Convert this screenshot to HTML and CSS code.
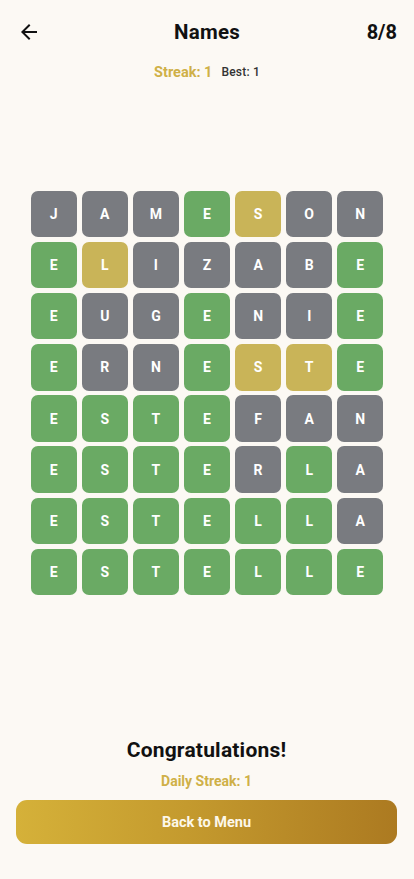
FILE: index.html
```html
<!DOCTYPE html>
<html lang="en">
<head>
<meta charset="utf-8">
<meta name="viewport" content="width=device-width, initial-scale=1">
<title>Names</title>
<link rel="stylesheet" href="styles.css">
</head>
<body>
<div class="app">
  <header class="header">
    <button class="back" aria-label="Back">
      <svg viewBox="0 0 24 24" width="24" height="24"><path d="M20 11H7.83l5.59-5.59L12 4l-8 8 8 8 1.41-1.41L7.83 13H20v-2z" fill="#111"/></svg>
    </button>
    <h1 class="title">Names</h1>
    <div class="count">8/8</div>
  </header>
  <div class="streak-row">
    <span class="streak">Streak: 1</span>
    <span class="best">Best: 1</span>
  </div>
  <main class="board-area">
    <div class="board">
      <div class="tile x">J</div><div class="tile x">A</div><div class="tile x">M</div><div class="tile g">E</div><div class="tile y">S</div><div class="tile x">O</div><div class="tile x">N</div>
      <div class="tile g">E</div><div class="tile y">L</div><div class="tile x">I</div><div class="tile x">Z</div><div class="tile x">A</div><div class="tile x">B</div><div class="tile g">E</div>
      <div class="tile g">E</div><div class="tile x">U</div><div class="tile x">G</div><div class="tile g">E</div><div class="tile x">N</div><div class="tile x">I</div><div class="tile g">E</div>
      <div class="tile g">E</div><div class="tile x">R</div><div class="tile x">N</div><div class="tile g">E</div><div class="tile y">S</div><div class="tile y">T</div><div class="tile g">E</div>
      <div class="tile g">E</div><div class="tile g">S</div><div class="tile g">T</div><div class="tile g">E</div><div class="tile x">F</div><div class="tile x">A</div><div class="tile x">N</div>
      <div class="tile g">E</div><div class="tile g">S</div><div class="tile g">T</div><div class="tile g">E</div><div class="tile x">R</div><div class="tile g">L</div><div class="tile x">A</div>
      <div class="tile g">E</div><div class="tile g">S</div><div class="tile g">T</div><div class="tile g">E</div><div class="tile g">L</div><div class="tile g">L</div><div class="tile x">A</div>
      <div class="tile g">E</div><div class="tile g">S</div><div class="tile g">T</div><div class="tile g">E</div><div class="tile g">L</div><div class="tile g">L</div><div class="tile g">E</div>
    </div>
  </main>
  <footer class="footer">
    <div class="congrats">Congratulations!</div>
    <div class="daily">Daily Streak: 1</div>
    <button class="menu-btn">Back to Menu</button>
  </footer>
</div>
</body>
</html>
```

FILE: styles.css
```css
* { box-sizing: border-box; }
html, body {
  margin: 0;
  padding: 0;
  background: #fcf9f4;
}
body {
  font-family: Roboto, "Noto Sans", "Liberation Sans", sans-serif;
  color: #111;
}
.app {
  height: 879px;
  width: 414px;
  display: flex;
  flex-direction: column;
}
.header {
  height: 64px;
  display: flex;
  align-items: center;
  justify-content: space-between;
  padding: 0 17px 0 17px;
  position: relative;
}
.back {
  background: none;
  border: 0;
  padding: 0;
  width: 24px;
  height: 24px;
  display: flex;
}
.title {
  position: absolute;
  left: 0;
  right: 0;
  text-align: center;
  margin: 0;
  font-size: 20.5px;
  font-weight: 700;
  letter-spacing: 0.2px;
  pointer-events: none;
}
.count {
  font-size: 20px;
  font-weight: 700;
}
.streak-row {
  height: 18px;
  margin-top: -1px;
  display: flex;
  justify-content: center;
  align-items: center;
  gap: 9px;
}
.streak {
  color: #cfb047;
  font-size: 14.5px;
  font-weight: 700;
}
.best {
  color: #333;
  font-size: 12px;
  font-weight: 500;
  letter-spacing: 0.2px;
}
.board-area {
  flex: 1;
  display: flex;
  justify-content: center;
  align-items: flex-start;
  padding-top: 110px;
}
.board {
  display: grid;
  grid-template-columns: repeat(7, 46.3px);
  grid-auto-rows: 46.3px;
  gap: 4.8px;
}
.tile {
  border-radius: 7px;
  display: flex;
  align-items: center;
  justify-content: center;
  color: #fff;
  font-size: 14px;
  font-weight: 700;
}
.tile.x { background: #797b80; }
.tile.g { background: #6aaa64; }
.tile.y { background: #c9b458; }
.footer {
  display: flex;
  flex-direction: column;
  align-items: center;
  padding: 0 17px 35px 16px;
}
.congrats {
  font-size: 21px;
  font-weight: 700;
  letter-spacing: 0.2px;
  line-height: 24px;
  margin-bottom: 9px;
}
.daily {
  color: #cfb047;
  font-size: 14px;
  font-weight: 700;
  line-height: 20px;
  margin-bottom: 9px;
}
.menu-btn {
  width: 100%;
  height: 44px;
  border: 0;
  border-radius: 11px;
  background: linear-gradient(90deg, #d5b139 0%, #c49a2e 45%, #ac7a21 100%);
  color: #fdf8ea;
  font-family: Roboto, "Noto Sans", "Liberation Sans", sans-serif;
  font-size: 14.5px;
  font-weight: 700;
}
```
